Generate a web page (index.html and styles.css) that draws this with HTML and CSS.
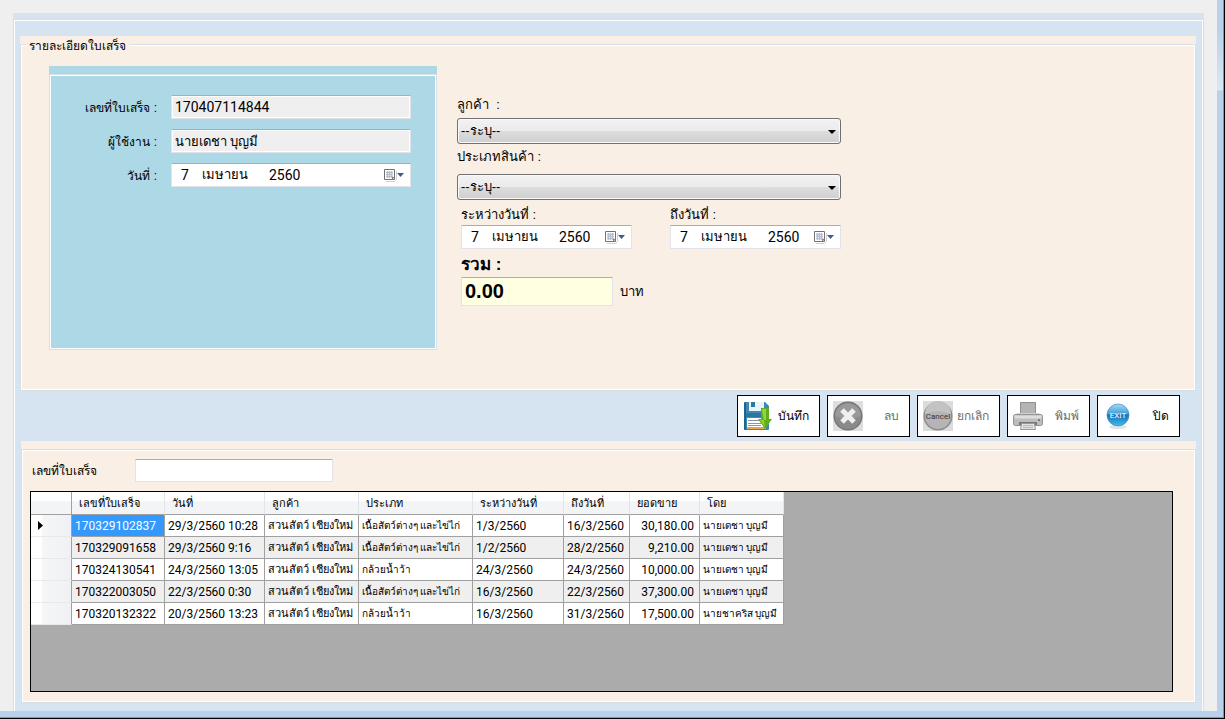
FILE: index.html
```html
<!DOCTYPE html>
<html lang="th">
<head>
<meta charset="utf-8">
<title>รายละเอียดใบเสร็จ</title>
<link rel="stylesheet" href="styles.css">
</head>
<body>
<svg class="defs" aria-hidden="true">
  <symbol id="calendar" viewBox="0 0 21 13">
    <path d="M2 12.500h8.500l2-2V2" fill="none" stroke="#d8cfca"/>
    <path d="M.5.5h10v10h-10z" fill="#fff" stroke="#76706e"/>
    <path d="M2 2h7v7H2z" fill="#dfe4ee"/>
    <path d="M2 3.500h7M2 5.500h7M2 7.500h7M3.500 2v7M5.500 2v7M7.500 2v7" stroke="#a9b4c8" stroke-width=".7"/>
    <path d="M8 11V8h3z" fill="#8a8482"/>
    <path d="M13 4h7l-3.500 4z" fill="#44598a"/>
  </symbol>
</svg>
<div class="window">
<main class="client">
  <div class="group outer">
    <div class="frame outer-frame">

      <section class="group details" aria-labelledby="details-title">
        <h1 class="legend" id="details-title">รายละเอียดใบเสร็จ</h1>
        <div class="frame details-frame">
          <div class="group receipt">
            <div class="frame receipt-frame">
              <label for="receipt-no">เลขที่ใบเสร็จ :</label>
              <input class="box readonly" id="receipt-no" type="text" value="170407114844" readonly>
              <label for="user">ผู้ใช้งาน :</label>
              <input class="box readonly name" id="user" type="text" value="นายเดชา บุญมี" readonly>
              <label for="day">วันที่ :</label>
              <div class="box date">
                <input class="day" id="day" type="text" value="7"><input class="month" type="text" aria-label="เดือน" value="เมษายน"><input class="year" type="text" aria-label="ปี" value="2560">
                <button class="pick" type="button" aria-label="ปฏิทิน"><svg><use href="#calendar"/></svg></button>
              </div>
            </div>
          </div>

          <div class="filters">
            <label for="customer">ลูกค้า &nbsp;:</label>
            <div class="combo"><select id="customer"><option>--ระบุ--</option></select><svg viewBox="0 0 8 4"><path d="M0 0h8L4 4z"/></svg></div>
            <label class="type-label" for="type">ประเภทสินค้า :</label>
            <div class="combo"><select id="type"><option>--ระบุ--</option></select><svg viewBox="0 0 8 4"><path d="M0 0h8L4 4z"/></svg></div>
            <div class="range">
              <div class="range-item">
                <label for="from">ระหว่างวันที่ :</label>
                <div class="box date">
                  <input class="day" id="from" type="text" value="7"><input class="month" type="text" aria-label="เดือน" value="เมษายน"><input class="year" type="text" aria-label="ปี" value="2560">
                  <button class="pick" type="button" aria-label="ปฏิทิน"><svg><use href="#calendar"/></svg></button>
                </div>
              </div>
              <div class="range-item">
                <label for="to">ถึงวันที่ :</label>
                <div class="box date">
                  <input class="day" id="to" type="text" value="7"><input class="month" type="text" aria-label="เดือน" value="เมษายน"><input class="year" type="text" aria-label="ปี" value="2560">
                  <button class="pick" type="button" aria-label="ปฏิทิน"><svg><use href="#calendar"/></svg></button>
                </div>
              </div>
            </div>
            <label class="total-label" for="total">รวม :</label>
            <div class="total-row">
              <input class="box total" id="total" type="text" value="0.00">
              <span>บาท</span>
            </div>
          </div>
        </div>
      </section>

      <div class="actions">
        <button type="button">
          <svg viewBox="0 0 30 30">
            <path d="M1 2q0-1 1-1h20l4 4v23q0 1-1 1H2q-1 0-1-1z" fill="#3c8ab3"/>
            <path d="M1 2l2-1v28H2q-1 0-1-1z" fill="#1e648c"/>
            <path d="M3 12h23v4H3z" fill="#2d769e"/>
            <path d="M6 1h15v9H6z" fill="#e8f3f8"/><path d="M8 1h4v5H8z" fill="#2d769e"/>
            <path d="M4 17h18v10H4z" fill="#fff"/>
            <path d="M5 19.500h13M5 22.500h13M5 24.500h13" stroke="#8796a3"/>
            <path d="M4 26h19v2H4z" fill="#e5a24b"/>
            <path d="M18 7h8v11h3l-7 10-7-10h3z" fill="#5fae1c"/>
            <path d="M19 8h4v11h-6l5 7z" fill="#96d43c"/>
          </svg>
          <span>บันทึก</span>
        </button>
        <button type="button" disabled>
          <svg viewBox="0 0 30 30">
            <path d="M0 0h30v30H0z" fill="#dedede"/>
            <circle cx="15" cy="15" r="14.500" fill="#747474"/>
            <circle cx="15" cy="15" r="13" fill="#999"/>
            <path d="M2 15a13 13 0 0 0 26 0q-13 6-26 0z" fill="#8a8a8a"/>
            <path d="M9 9l12 12M21 9L9 21" stroke="#f0f0f0" stroke-width="5"/>
          </svg>
          <span>ลบ</span>
        </button>
        <button type="button" disabled>
          <svg viewBox="0 0 30 30">
            <path d="M0 0h30v30H0z" fill="#dcdcdc"/>
            <circle cx="15" cy="15" r="14.500" fill="#8b8b8b"/>
            <circle cx="15" cy="15" r="13" fill="#b5b5b5"/>
            <path d="M2 13a13 13 0 0 1 26 0q-13-6-26 0z" fill="#c3c3c3"/>
            <text x="15" y="18" text-anchor="middle" class="cancel-mark">Cancel</text>
          </svg>
          <span>ยกเลิก</span>
        </button>
        <button type="button" disabled>
          <svg viewBox="0 0 30 30">
            <path d="M7.500 1.500h15v12h-15z" fill="#b4b4b4" stroke="#8d8d8d"/>
            <path d="M4 12h22l3 5H1z" fill="#d2d2d2"/>
            <rect x=".5" y="13.500" width="29" height="11" rx="2" fill="#bdbdbd" stroke="#929292"/>
            <path d="M1.500 16h27" stroke="#ddd" stroke-width="3"/>
            <path d="M6 21h18v3H6z" fill="#777"/>
            <path d="M8.500 22.500h13l1 6h-15z" fill="#e2e2e2" stroke="#999"/>
            <path d="M10 24.500h10M10 26.500h10" stroke="#bbb"/>
            <circle cx="26" cy="19" r="1" fill="#666"/>
          </svg>
          <span>พิมพ์</span>
        </button>
        <button type="button">
          <svg viewBox="0 0 30 30">
            <defs><linearGradient id="ball" x2="0" y2="1"><stop stop-color="#a5daf2"/><stop offset=".45" stop-color="#3f9fd8"/><stop offset=".5" stop-color="#1574b8"/><stop offset="1" stop-color="#45bbec"/></linearGradient></defs>
            <ellipse cx="15" cy="26" rx="9" ry="2" fill="#e4e4e4"/>
            <circle cx="15" cy="14" r="11" fill="url(#ball)" stroke="#3581b3" stroke-width=".6"/>
            <text x="15" y="17" text-anchor="middle" class="exit-mark">EXIT</text>
          </svg>
          <span>ปิด</span>
        </button>
      </div>

      <section class="group history">
        <div class="frame history-frame">
          <div class="search">
            <label for="search">เลขที่ใบเสร็จ</label>
            <input class="box" id="search" type="text">
          </div>
          <div class="grid">
            <table>
              <colgroup><col class="c0"><col class="c1"><col class="c2"><col class="c3"><col class="c4"><col class="c5"><col class="c6"><col class="c7"><col class="c8"></colgroup>
              <thead>
                <tr><th></th><th>เลขที่ใบเสร็จ</th><th>วันที่</th><th>ลูกค้า</th><th>ประเภท</th><th>ระหว่างวันที่</th><th>ถึงวันที่</th><th>ยอดขาย</th><th>โดย</th></tr>
              </thead>
              <tbody>
                <tr><th scope="row"><svg class="current" viewBox="0 0 5 9"><path d="M0 0l5 4.500L0 9z"/></svg></th><td class="selected">170329102837</td><td>29/3/2560 10:28</td><td class="customer">สวนสัตว์ เชียงใหม่</td><td class="thai">เนื้อสัตว์ต่างๆ และไข่ไก่</td><td>1/3/2560</td><td class="num">16/3/2560</td><td class="num">30,180.00</td><td class="thai">นายเดชา บุญมี</td></tr>
                <tr><th scope="row"></th><td>170329091658</td><td>29/3/2560 9:16</td><td class="customer">สวนสัตว์ เชียงใหม่</td><td class="thai">เนื้อสัตว์ต่างๆ และไข่ไก่</td><td>1/2/2560</td><td class="num">28/2/2560</td><td class="num">9,210.00</td><td class="thai">นายเดชา บุญมี</td></tr>
                <tr><th scope="row"></th><td>170324130541</td><td>24/3/2560 13:05</td><td class="customer">สวนสัตว์ เชียงใหม่</td><td class="thai">กล้วยน้ำว้า</td><td>24/3/2560</td><td class="num">24/3/2560</td><td class="num">10,000.00</td><td class="thai">นายเดชา บุญมี</td></tr>
                <tr><th scope="row"></th><td>170322003050</td><td>22/3/2560 0:30</td><td class="customer">สวนสัตว์ เชียงใหม่</td><td class="thai">เนื้อสัตว์ต่างๆ และไข่ไก่</td><td>16/3/2560</td><td class="num">22/3/2560</td><td class="num">37,300.00</td><td class="thai">นายเดชา บุญมี</td></tr>
                <tr><th scope="row"></th><td>170320132322</td><td>20/3/2560 13:23</td><td class="customer">สวนสัตว์ เชียงใหม่</td><td class="thai">กล้วยน้ำว้า</td><td>16/3/2560</td><td class="num">31/3/2560</td><td class="num">17,500.00</td><td class="thai">นายชาคริส บุญมี</td></tr>
              </tbody>
            </table>
          </div>
        </div>
      </section>

    </div>
  </div>
</main>
</div>
</body>
</html>
```
FILE: styles.css
```css
* { box-sizing: border-box; }

body {
  margin: 0;
  font: 13px/20px "Liberation Sans", sans-serif;
  color: #000;
}

input, select, button { font: inherit; color: inherit; }

.defs { display: none; }

/* window edge: glass border, cyan glow, black outline */
.window {
  display: flex;
  flex-direction: column;
  min-height: 100vh;
  padding: 0 8px 8px 0;
  background: linear-gradient(#b9d1ea, #b9d1ea 30px, #dbe8f6 90px, #b9d1ea 91px);
  box-shadow: inset -1px -1px #000, inset -2px -2px #28b8dc;
}

.client {
  display: flex;
  flex-direction: column;
  flex: 1;
  padding: 13px 13px 0;
  background: #efefef;
}

/* group boxes: a strip of background above a two-tone frame */
.group {
  display: flex;
  flex-direction: column;
  position: relative;
  padding-top: 8px;
}

.frame {
  flex: 1;
  border: 1px solid #d5dfe5;
  box-shadow: inset 1px 1px #fff, inset -1px -1px #fff;
}

.outer {
  flex: 1;
  padding-top: 6px;
  background: #d6e4f1;
}

.outer-frame {
  display: flex;
  flex-direction: column;
  border-bottom: 0;
  box-shadow: inset 1px 1px #fff, inset -1px 0 #fff;
  padding: 16px 7px 8px 6px;
}

.details, .history { background: #faefe5; }

.legend {
  position: absolute;
  top: 0;
  left: 6px;
  margin: 0;
  padding: 0 3px;
  background: #faefe5;
  font-size: 12px;
  font-weight: 400;
  line-height: 20px;
}

.details-frame {
  display: flex;
  align-items: flex-start;
  gap: 20px;
  min-height: 347px;
  padding: 21px 28px;
}

.receipt { flex: 0 0 388px; background: #add8e6; }

.receipt-frame {
  display: grid;
  grid-template-columns: 107px 240px;
  grid-auto-rows: 24px;
  gap: 10px 14px;
  align-content: start;
  min-height: 276px;
  padding: 20px 0;
}

.receipt-frame label { text-align: right; font-size: 12px; line-height: 26px; }

.box {
  width: 100%;
  height: 24px;
  padding: 0 3px;
  border: 1px solid #e2e3ea;
  border-top-color: #abadb3;
  border-radius: 1px;
  background: #fff;
  font: 14px/20px Roboto, "Liberation Sans", sans-serif;
}
.box.name { font-size: 13px; }

.readonly { background: #efefef; box-shadow: inset 0 0 0 1px #fff; }

.date { display: flex; align-items: center; padding: 0 5px 0 9px; }
.date input { padding: 0; border: 0; background: none; }
.date .day { width: 21px; }
.date .month { width: 67px; font-size: 13px; }
.date .year { width: 40px; }

.pick {
  display: flex;
  margin-left: auto;
  padding: 0;
  border: 0;
  background: none;
}
.pick svg { width: 21px; height: 13px; }

.filters {
  display: flex;
  flex-direction: column;
  flex: 0 0 384px;
  padding-top: 29px;
}
.filters label { line-height: 20px; }
.filters .type-label { margin: 3px 0 7px; }

.combo { position: relative; margin-top: 3px; }
.filters .type-label + .combo { margin-top: 0; }
.combo select {
  display: block;
  width: 100%;
  height: 26px;
  padding: 0 20px 0 3px;
  appearance: none;
  border: 1px solid #707070;
  border-radius: 3px;
  background: linear-gradient(#f2f2f2, #ebebeb 48%, #dddddd 50%, #cfcfcf);
  box-shadow: inset 0 0 0 1px #fafafa;
}
.combo svg {
  position: absolute;
  top: 12px;
  right: 5px;
  width: 8px;
  height: 4px;
  pointer-events: none;
}

.range { display: flex; justify-content: space-between; padding: 5px 0 0 4px; }
.range-item { width: 171px; display: flex; flex-direction: column; }

.filters .total-label {
  padding: 4px 0 0 4px;
  font-size: 17px;
  font-weight: 700;
  line-height: 24px;
}

.total-row { display: flex; align-items: center; gap: 7px; padding-left: 4px; }
.total-row .total {
  width: 152px;
  height: 29px;
  background: #ffffe1;
  font: 700 20px "Liberation Sans", sans-serif;
}

.actions {
  display: flex;
  justify-content: flex-end;
  gap: 7px;
  padding: 4px 16px;
}
.actions button {
  display: flex;
  align-items: center;
  justify-content: space-between;
  width: 83px;
  height: 42px;
  padding: 0 10px 0 5px;
  border: 1px solid #000;
  background: #fff;
  font-size: 12px;
}
.actions button:disabled { color: #6d6d6d; }
.actions svg { flex: none; width: 30px; height: 30px; }
.cancel-mark { font: 8px Roboto, "Liberation Sans", sans-serif; fill: #333; }
.exit-mark { font: 8px Roboto, "Liberation Sans", sans-serif; fill: #fff; }

.history { flex: 1; margin-left: 1px; }
.history-frame { display: flex; flex-direction: column; padding: 9px 22px 10px 8px; }

.search { display: flex; align-items: center; padding-left: 2px; }
.search label { width: 103px; font-size: 12px; }
.search .box { width: 198px; height: 23px; }

.grid {
  flex: 1;
  margin-top: 9px;
  border: 1px solid #000;
  background: #ababab;
}

table {
  table-layout: fixed;
  width: 753px;
  border-collapse: separate;
  border-spacing: 0;
  font: 12px/20px Roboto, "Liberation Sans", sans-serif;
}
.c0 { width: 41px; }
.c1 { width: 93px; }
.c2 { width: 100px; }
.c3 { width: 94px; }
.c4 { width: 114px; }
.c5 { width: 91px; }
.c6 { width: 66px; }
.c7 { width: 70px; }
.c8 { width: 84px; }

th, td {
  height: 22px;
  padding: 0 3px;
  white-space: nowrap;
  text-align: left;
  font-weight: 400;
  border: solid #a0a0a0;
  border-width: 0 1px 1px 0;
}
td { background: #fff; }
tbody tr:nth-child(even) td { background: #efefef; }
thead th {
  height: 23px;
  padding: 2px 7px 0;
  border-right-color: #e3e4e6;
  background: linear-gradient(#fff 40%, #f3f4f6 45%, #f3f4f6);
  font-size: 11px;
}
thead th:first-child { border-right-color: #a0a0a0; }
tbody th { padding-left: 7px; border-bottom-color: #e9e9eb; background: linear-gradient(90deg, #fff 25%, #f5f6f8 30%, #eff1f4); }
td.customer { font-size: 11px; }
td.thai { font-size: 10px; }
td.num { text-align: right; padding-right: 5px; }
tbody td.selected { background: #3399ff; color: #fff; }
.current { display: block; width: 5px; height: 9px; }
```
